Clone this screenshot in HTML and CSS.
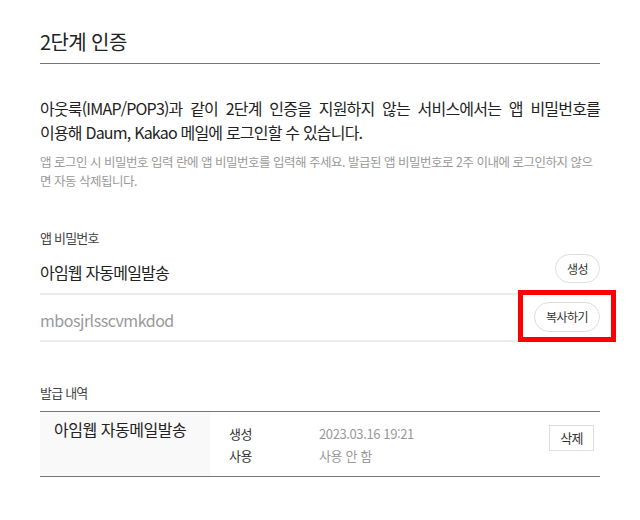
FILE: index.html
```html
<!DOCTYPE html>
<html lang="ko">
<head>
<meta charset="utf-8">
<title>2단계 인증</title>
<link rel="stylesheet" href="styles.css">
</head>
<body>
<div class="page">
  <h1 class="title">2단계 인증</h1>
  <p class="desc">아웃룩(IMAP/POP3)과 같이 2단계 인증을 지원하지 않는 서비스에서는 앱 비밀번호를 이용해 Daum, Kakao 메일에 로그인할 수 있습니다.</p>
  <p class="note">앱 로그인 시 비밀번호 입력 란에 앱 비밀번호를 입력해 주세요. 발급된 앱 비밀번호로 2주 이내에 로그인하지 않으면 자동 삭제됩니다.</p>

  <div class="label label-pw">앱 비밀번호</div>
  <div class="row row-name">
    <span class="name">아임웹 자동메일발송</span>
    <button class="pill pill-make">생성</button>
  </div>
  <div class="row row-pw">
    <span class="pw">mbosjrlsscvmkdod</span>
    <span class="mark-wrap">
      <button class="pill pill-copy">복사하기</button>
      <span class="highlight"></span>
    </span>
  </div>

  <div class="label label-hist">발급 내역</div>
  <div class="hist">
    <div class="hist-name">아임웹 자동메일발송</div>
    <div class="hist-info">
      <span class="k">생성</span><span class="v">2023.03.16 19:21</span>
      <span class="k">사용</span><span class="v">사용 안 함</span>
    </div>
    <div class="hist-act">
      <button class="btn-del">삭제</button>
    </div>
  </div>
</div>
</body>
</html>
```
FILE: styles.css
```css
* { box-sizing: border-box; }
html, body { margin: 0; background: #fff; }
body {
  font-family: "Noto Sans CJK KR", "Noto Sans", sans-serif;
  color: #222;
  letter-spacing: -0.05em;
}
.page { width: 640px; padding: 0 40px; }
.title {
  margin: 0;
  padding: 27px 0 6px;
  font-size: 20px;
  line-height: 30px;
  font-weight: 400;
  letter-spacing: -0.03em;
  border-bottom: 1px solid #777;
}
.desc {
  margin: 32px 0 0;
  font-size: 16px;
  line-height: 24px;
  color: #222;
  word-break: keep-all;
  text-align: justify;
}
.note {
  margin: 8px 0 0;
  font-size: 12.5px;
  line-height: 19px;
  letter-spacing: -0.04em;
  word-break: break-all;
  color: #999;
}
.label {
  font-size: 13px;
  line-height: 18px;
  color: #444;
}
.label-pw { margin-top: 39px; }
.label-hist { margin-top: 42px; }
.row {
  display: flex;
  align-items: center;
  justify-content: space-between;
  border-bottom: 2px solid #ebebeb;
}
.row-name { height: 48px; }
.row-pw { height: 47px; }
.name { font-size: 16px; color: #222; padding-top: 4px; }
.pw { font-size: 16px; color: #999; padding-top: 4px; letter-spacing: -0.03em; }
.pill {
  font-family: inherit;
  letter-spacing: -0.05em;
  font-size: 12px;
  color: #333;
  background: #fff;
  border: 1px solid #ddd;
  border-radius: 15px;
  height: 30px;
  padding: 0;
  margin: 0;
}
.pill-make { width: 45px; height: 29px; margin-top: -4px; }
.pill-copy { width: 66px; display: block; }
.mark-wrap { position: relative; display: block; margin-top: -2px; }
.highlight {
  position: absolute;
  left: -16px; right: -16px; top: -12px; bottom: -10px;
  border: 5px solid #ff0000;
}
.hist {
  margin-top: 9px;
  display: flex;
  height: 66px;
  border-top: 1px solid #777;
  border-bottom: 1px solid #777;
}
.hist-name {
  width: 170px;
  background: #f9f9f9;
  padding: 5px 0 0 14px;
  font-size: 16px;
  line-height: 24px;
  letter-spacing: -0.03em;
}
.hist-info {
  flex: 1;
  display: grid;
  grid-template-columns: 90px auto;
  grid-auto-rows: 22px;
  align-content: start;
  padding: 11px 0 0 19px;
  font-size: 13px;
  line-height: 22px;
  letter-spacing: -0.03em;
}
.hist-info .k { color: #333; }
.hist-info .v { color: #999; }
.hist-act { padding: 12px 6px 0 0; }
.btn-del {
  font-family: inherit;
  letter-spacing: -0.05em;
  font-size: 13px;
  color: #333;
  background: #fff;
  border: 1px solid #ddd;
  border-radius: 0;
  width: 45px;
  height: 26px;
  padding: 0;
}
```
